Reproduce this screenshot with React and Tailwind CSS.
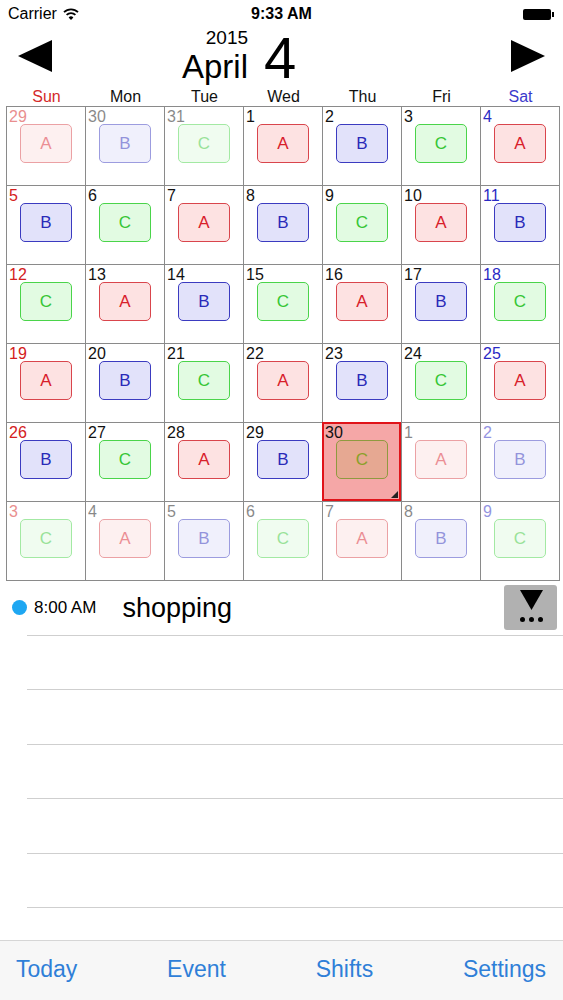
import React from "react";

const SHIFTS = {
  A: "border-[#d9454c] bg-[#fde2e2] text-[#d8202a]",
  B: "border-[#3b3bc0] bg-[#e2e2fa] text-[#2a2ab8]",
  C: "border-[#4ad44a] bg-[#e2fbe2] text-[#36c636]",
};

const DAYS = ["Sun", "Mon", "Tue", "Wed", "Thu", "Fri", "Sat"];

// April 2015 starts on a Wednesday
const cells = Array.from({ length: 42 }, (_, i) => {
  let date = i - 2;
  let other = false;
  if (i < 3) {
    date = 29 + i;
    other = true;
  } else if (date > 30) {
    date = date - 30;
    other = true;
  }
  return { date, other, shift: "ABC"[i % 3], col: i % 7, selected: i === 32 };
});

function numberColor(col) {
  if (col === 0) return "text-[#d42020]";
  if (col === 6) return "text-[#2a2ac4]";
  return "text-[#111]";
}

function Cell({ c }) {
  const box = c.selected
    ? "border-[#8f9a3f] bg-[#e6a892] text-[#8aa02a]"
    : SHIFTS[c.shift];
  return (
    <div
      className={`relative h-[79px] border-r border-b border-[#8a8a8a] ${
        c.selected ? "bg-[#f5a7a7]" : ""
      }`}
    >
      <div className={`flex flex-col ${c.other ? "opacity-50" : ""}`}>
        <div
          className={`h-[17px] pl-[2px] pt-[2px] text-[16px] leading-[16px] ${numberColor(
            c.col
          )}`}
        >
          {c.date}
        </div>
        <div
          className={`ml-[13px] w-[52px] h-[39px] rounded-[5px] border-[1.5px] flex items-center justify-center text-[17px] ${box}`}
        >
          {c.shift}
        </div>
      </div>
      {c.selected && (
        <>
          <div className="absolute top-[-1px] left-[-1px] right-0 bottom-0 border-2 border-[#e0141a]" />
          <svg className="absolute right-[3px] bottom-[3px]" width="7" height="7">
            <polygon points="7,0 7,7 0,7" fill="#222" />
          </svg>
        </>
      )}
    </div>
  );
}

function Wifi() {
  return (
    <svg width="16" height="12" viewBox="0 0 16 12">
      <path d="M1 4.2 A10 10 0 0 1 15 4.2" stroke="#000" strokeWidth="1.8" fill="none" />
      <path d="M3.6 6.9 A6.3 6.3 0 0 1 12.4 6.9" stroke="#000" strokeWidth="1.8" fill="none" />
      <path d="M8 12 L5.6 9.4 A3.3 3.3 0 0 1 10.4 9.4 Z" fill="#000" />
    </svg>
  );
}

export default function App() {
  const rows = [0, 1, 2, 3, 4, 5];
  return (
    <div className="w-[563px] h-[1000px] bg-white flex flex-col overflow-hidden font-['Liberation_Sans',Arial,sans-serif] text-black">
      {/* Status bar */}
      <div className="h-[28px] flex items-center relative">
        <div className="flex items-center ml-[8px] gap-[6px] text-[16px]">
          <span>Carrier</span>
          <Wifi />
        </div>
        <div className="absolute left-0 right-0 text-center text-[16px] font-bold">
          9:33 AM
        </div>
        <div className="ml-auto mr-[9px] flex items-center">
          <div className="w-[28px] h-[11px] rounded-[2px] bg-black" />
          <div className="w-[2px] h-[5px] bg-black ml-[1px]" />
        </div>
      </div>

      {/* Month header */}
      <div className="h-[59px] flex items-start">
        <svg className="mt-[12px] ml-[18px]" width="34" height="32" viewBox="0 0 34 32">
          <polygon points="0,16 34,0 34,32" fill="#000" />
        </svg>
        <div className="ml-[130px] flex items-start">
          <div className="flex flex-col items-end">
            <div className="text-[19px] leading-[19px]">2015</div>
            <div className="mt-[4px] text-[33px] leading-[32px]">April</div>
          </div>
          <div className="ml-[16px] mt-[1px] text-[58px] leading-[58px]">4</div>
        </div>
        <svg className="mt-[12px] ml-auto mr-[18px]" width="34" height="32" viewBox="0 0 34 32">
          <polygon points="34,16 0,0 0,32" fill="#000" />
        </svg>
      </div>

      {/* Weekday names */}
      <div className="ml-[6px] w-[554px] grid grid-cols-7 h-[19px] text-[16px] leading-[19px] pl-px">
        {DAYS.map((d, i) => (
          <div
            key={d}
            className={`text-center ${
              i === 0 ? "text-[#d42a2a]" : i === 6 ? "text-[#3a3acc]" : "text-[#111]"
            }`}
          >
            {d}
          </div>
        ))}
      </div>

      {/* Calendar grid */}
      <div className="ml-[6px] w-[554px] grid grid-cols-7 border-l border-t border-[#8a8a8a]">
        {cells.map((c, i) => (
          <Cell key={i} c={c} />
        ))}
      </div>

      {/* Event list */}
      <div className="flex flex-col">
        {rows.map((r) => (
          <div key={r} className="flex flex-col">
            <div className="h-[53.5px] flex items-center">
              {r === 0 && (
                <>
                  <div className="ml-[12px] w-[15px] h-[15px] rounded-full bg-[#1ea7f2]" />
                  <div className="ml-[7px] text-[17px]">8:00 AM</div>
                  <div className="ml-[26px] text-[27px]">shopping</div>
                  <div className="ml-auto mr-[6px] w-[53px] h-[45px] rounded-[3px] bg-[#b1b1b1] flex flex-col items-center">
                    <svg className="mt-[5px] ml-[1px]" width="23" height="20" viewBox="0 0 23 20">
                      <polygon points="0,0 23,0 11.5,20" fill="#000" />
                    </svg>
                    <div className="mt-[7px] ml-[1px] flex gap-[4px]">
                      <div className="w-[5px] h-[5px] rounded-full bg-black" />
                      <div className="w-[5px] h-[5px] rounded-full bg-black" />
                      <div className="w-[5px] h-[5px] rounded-full bg-black" />
                    </div>
                  </div>
                </>
              )}
            </div>
            <div className="ml-[27px] h-px bg-[#cfcfcf]" />
          </div>
        ))}
      </div>

      {/* Tab bar */}
      <div className="mt-auto h-[60px] border-t border-[#d6d6d6] bg-[#f7f7f7] flex items-center justify-between pl-[16px] pr-[17px] pb-[2px] text-[23px] text-[#2f7fd8]">
        <span>Today</span>
        <span>Event</span>
        <span>Shifts</span>
        <span>Settings</span>
      </div>
    </div>
  );
}
